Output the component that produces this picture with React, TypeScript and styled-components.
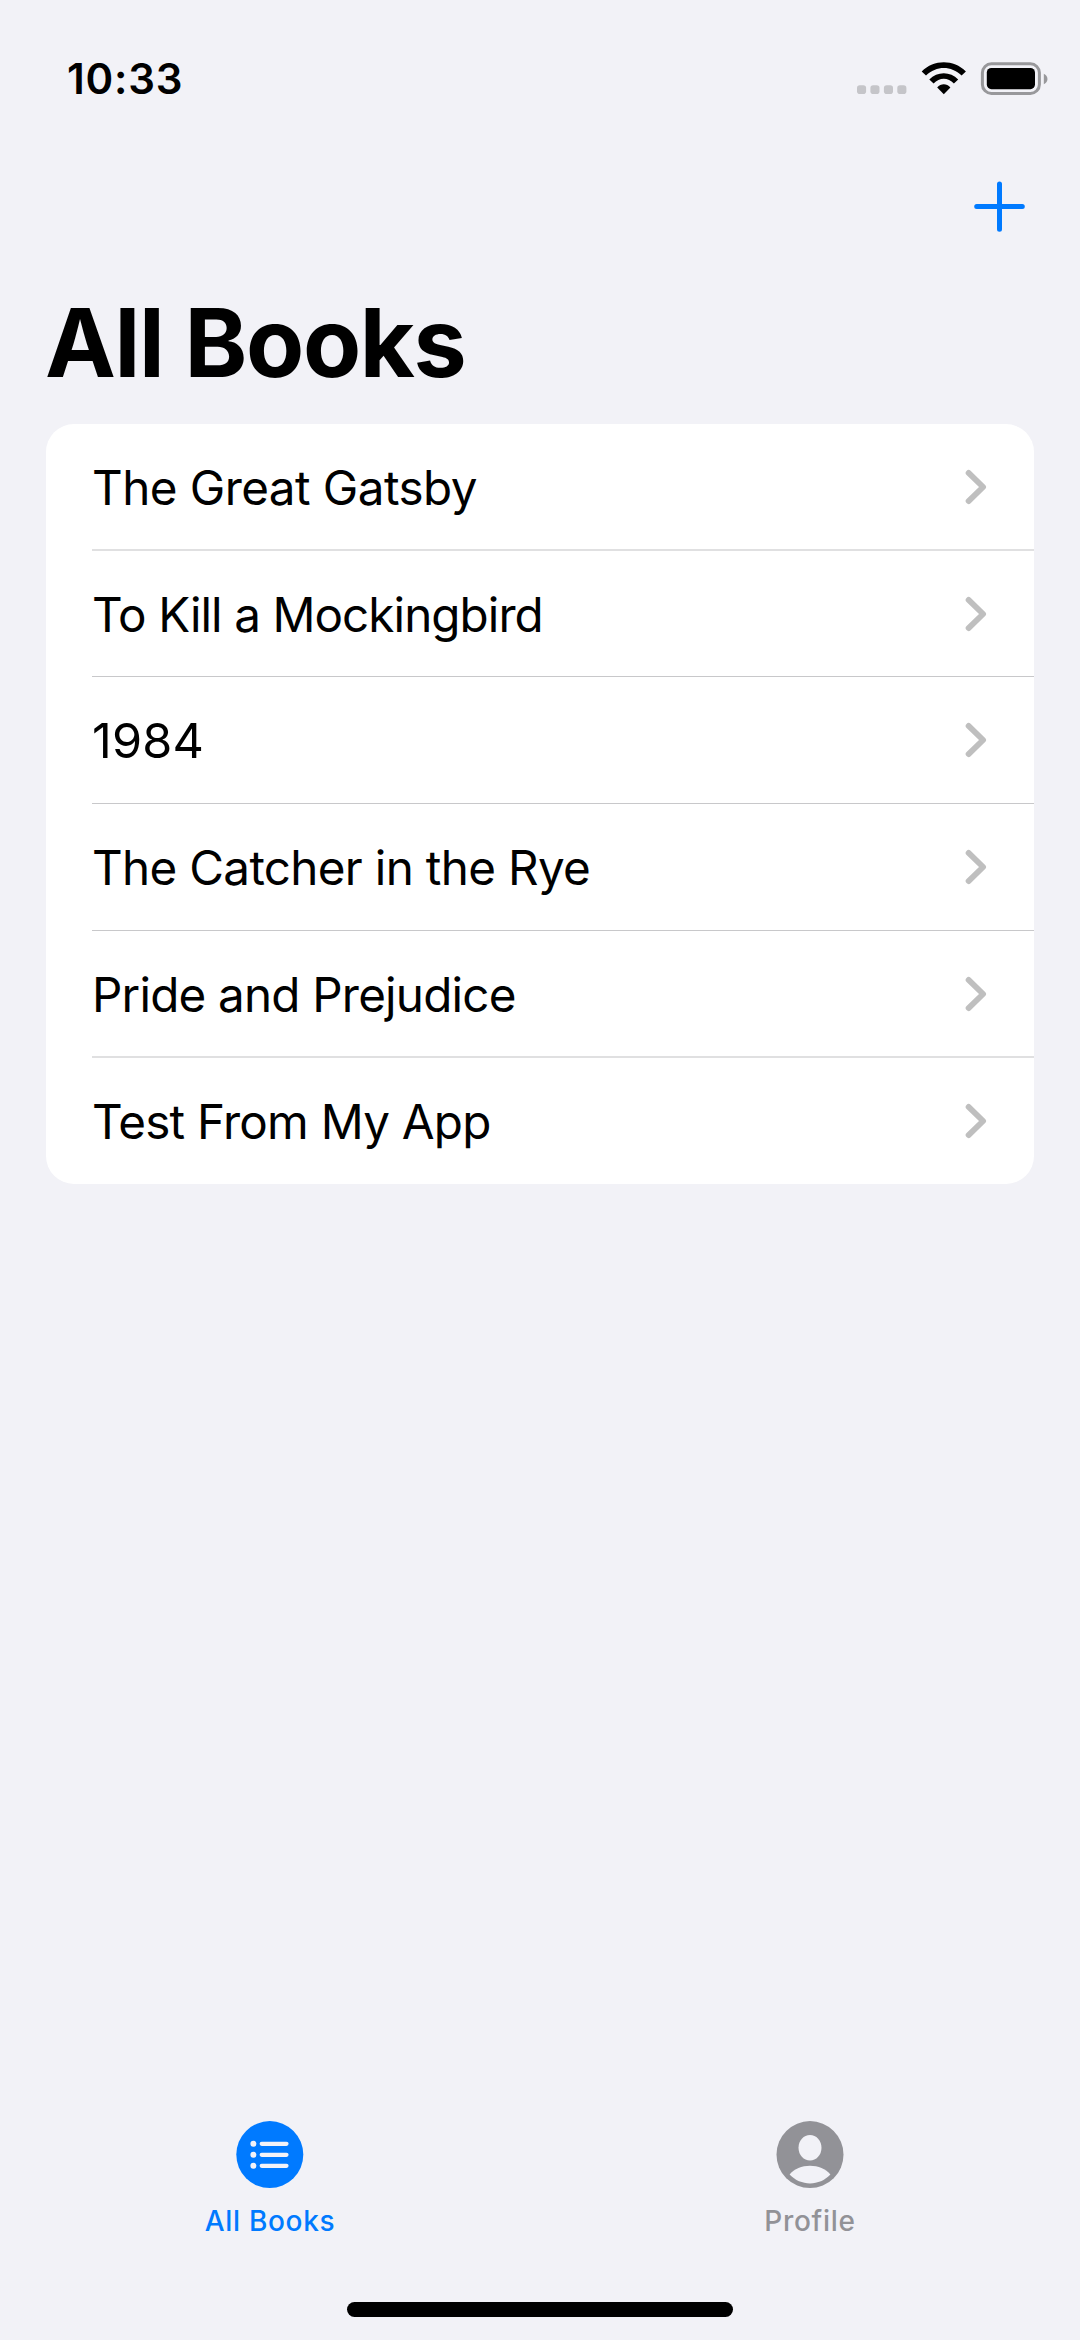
import React from "react";
import styled, { createGlobalStyle } from "styled-components";

const GlobalStyle = createGlobalStyle`
  * { box-sizing: border-box; }
  html, body { margin: 0; padding: 0; background: #f2f2f7; }
  body { font-family: Inter, "Liberation Sans", sans-serif; color: #000; }
`;

const Screen = styled.div`
  width: 1080px;
  height: 2340px;
  display: flex;
  flex-direction: column;
  background: #f2f2f7;
  overflow: hidden;
`;

const StatusBar = styled.header`
  height: 156px;
  flex: none;
  display: flex;
  justify-content: space-between;
  align-items: center;
  padding: 0 31px 0 67px;
`;

const Clock = styled.span`
  padding-top: 2px;
  font-size: 42px;
  line-height: 52px;
  font-weight: 600;
  letter-spacing: 0.8px;
`;

const StatusIcons = styled.div`
  display: flex;
`;

const NavBar = styled.nav`
  height: 100px;
  flex: none;
  display: flex;
  justify-content: flex-end;
  align-items: flex-start;
  padding: 20px 50px 0 0;
`;

const AddButton = styled.button`
  display: flex;
  padding: 0;
  border: 0;
  background: none;
`;

const Title = styled.h1`
  margin: 0;
  height: 168px;
  padding: 29px 0 0 45px;
  font-size: 95px;
  line-height: 116px;
  font-weight: 700;
  letter-spacing: -1.35px;
  white-space: nowrap;
`;

const BookList = styled.ul`
  list-style: none;
  flex: none;
  margin: 0 46px;
  padding: 0;
  display: grid;
  grid-template-rows: 127px 126px 127px 127px 127px 126px;
  background: #fff;
  border-radius: 28px;
`;

const BookRow = styled.li<{ $soft?: boolean }>`
  margin-left: 46px;
  padding-right: 47px;
  display: flex;
  align-items: center;
  justify-content: space-between;
  &:not(:last-child) {
    border-bottom: ${(p) => (p.$soft ? "2px solid #e0e0e1" : "1px solid #c8c8ca")};
  }
`;

const BookTitle = styled.span<{ $tracking: number; $size?: number }>`
  padding-top: 2px;
  font-size: ${(p) => p.$size ?? 47.6}px;
  line-height: 58px;
  font-weight: 400;
  letter-spacing: ${(p) => p.$tracking}px;
  white-space: nowrap;
`;

const Spacer = styled.div`
  flex: 1;
`;

const TabBar = styled.nav`
  flex: none;
  height: 181px;
  display: grid;
  grid-template-columns: 1fr 1fr;
`;

const Tab = styled.button<{ $active?: boolean }>`
  display: flex;
  flex-direction: column;
  align-items: center;
  gap: 15px;
  padding: 0;
  border: 0;
  background: none;
  font-family: inherit;
  color: ${(p) => (p.$active ? "#007aff" : "#929297")};
`;

const TabLabel = styled.span`
  font-size: 28px;
  line-height: 34px;
  font-weight: 500;
  letter-spacing: 0.7px;
`;

const HomeArea = styled.footer`
  flex: none;
  height: 38px;
  display: flex;
  justify-content: center;
`;

const HomeIndicator = styled.div`
  width: 386px;
  height: 15px;
  border-radius: 8px;
  background: #000;
`;

const StatusGlyphs = () => (
  <svg width="194" height="40" viewBox="855 58 194 40">
    {[857, 870.4, 883.9, 897.3].map((x) => (
      <rect key={x} x={x} y="85.2" width="9.1" height="8.9" rx="2.8" fill="#c5c5c9" />
    ))}
    <path d="M921.7 71.4 C934 59.2 953.6 59.2 965.9 71.4 L961.6 75.6 C951.2 65.4 936.4 65.4 926 75.6 Z" />
    <path d="M929.3 79.4 C937.3 71.3 950.3 71.3 958.2 79.4 L953.9 83.6 C948.2 77.2 939.4 77.2 933.6 83.6 Z" />
    <path d="M937.2 87.5 C941 83.3 946.6 83.3 950.4 87.5 L943.8 94.2 Z" />
    <rect x="982.4" y="63.8" width="57" height="29.6" rx="9" fill="none" stroke="#98989b" strokeWidth="3" />
    <rect x="986.8" y="68" width="48.2" height="21.2" rx="4.6" />
    <path d="M1043.8 73.8 C1048.7 75.7 1048.7 82.3 1043.8 84.2 Z" fill="#98989b" />
  </svg>
);

const PlusIcon = () => (
  <svg width="61" height="61" viewBox="969 176 61 61" fill="none" stroke="#007aff" strokeWidth="5" strokeLinecap="round">
    <path d="M976.7 206.6H1022.3M999.5 184V229.3" />
  </svg>
);

const Chevron = () => (
  <svg width="22" height="36" viewBox="0 0 22 36" fill="none" stroke="#bfbfbf" strokeWidth="5.8" strokeLinecap="round" strokeLinejoin="round">
    <path d="M3.6 3.9 18.1 18 3.6 32.1" />
  </svg>
);

const ListIcon = () => (
  <svg width="68" height="68" viewBox="0 0 68 68">
    <circle cx="33.8" cy="33.6" r="33.5" fill="#007aff" />
    {[22.8, 33.8, 44.8].map((y) => (
      <g key={y} fill="#f2f2f7">
        <circle cx="17.4" cy={y} r="3" />
        <rect x="23.6" y={y - 2.1} width="29" height="4.2" rx="2.1" />
      </g>
    ))}
  </svg>
);

const ProfileIcon = () => (
  <svg width="68" height="68" viewBox="0 0 68 68">
    <circle cx="34" cy="33.6" r="33.5" fill="#929297" />
    <ellipse cx="34" cy="26.8" rx="11.5" ry="12.8" fill="#f2f2f7" />
    <path d="M13.6 53.6 C22.5 41.8 45.5 41.8 54.4 53.6 C43.5 65.4 24.5 65.4 13.6 53.6 Z" fill="#f2f2f7" />
  </svg>
);

const books = [
  { title: "The Great Gatsby", tracking: -0.57, soft: true },
  { title: "To Kill a Mockingbird", tracking: -0.93 },
  { title: "1984", tracking: 0.2, size: 48.6 },
  { title: "The Catcher in the Rye", tracking: -0.68 },
  { title: "Pride and Prejudice", tracking: -0.8, soft: true },
  { title: "Test From My App", tracking: -0.76 },
];

export default function App() {
  return (
    <Screen>
      <GlobalStyle />
      <StatusBar>
        <Clock>10:33</Clock>
        <StatusIcons>
          <StatusGlyphs />
        </StatusIcons>
      </StatusBar>
      <NavBar>
        <AddButton aria-label="Add">
          <PlusIcon />
        </AddButton>
      </NavBar>
      <Title>All Books</Title>
      <BookList>
        {books.map((b) => (
          <BookRow key={b.title} $soft={b.soft}>
            <BookTitle $tracking={b.tracking} $size={b.size}>{b.title}</BookTitle>
            <Chevron />
          </BookRow>
        ))}
      </BookList>
      <Spacer />
      <TabBar>
        <Tab $active>
          <ListIcon />
          <TabLabel>All Books</TabLabel>
        </Tab>
        <Tab>
          <ProfileIcon />
          <TabLabel>Profile</TabLabel>
        </Tab>
      </TabBar>
      <HomeArea>
        <HomeIndicator />
      </HomeArea>
    </Screen>
  );
}
